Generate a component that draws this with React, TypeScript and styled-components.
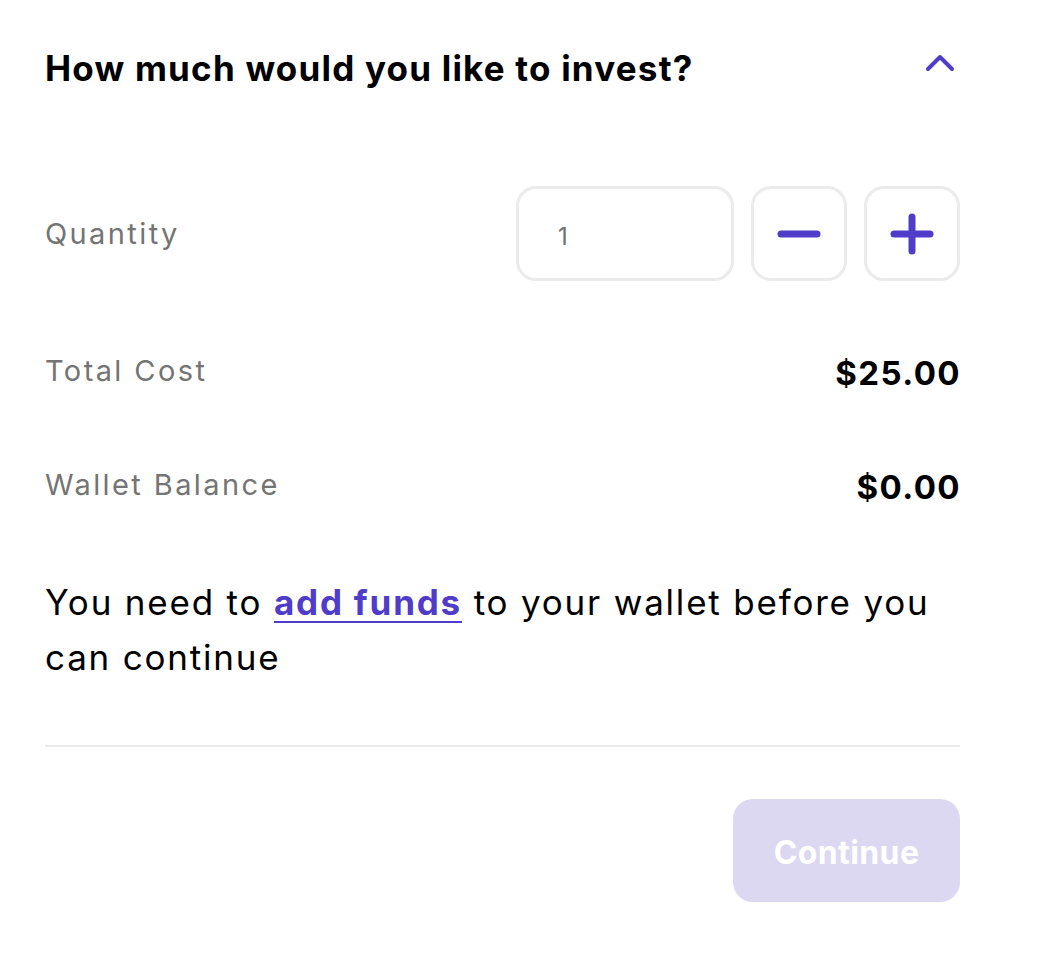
import styled, { createGlobalStyle } from "styled-components";

const GlobalStyle = createGlobalStyle`
  html, body {
    margin: 0;
    padding: 0;
    background: #ffffff;
  }
  body {
    font-family: Inter, "Noto Sans", sans-serif;
    color: #000;
  }
`;

const Panel = styled.div`
  width: 915px;
  padding: 40px 78px 0 45px;
  display: flex;
  flex-direction: column;
`;

const Header = styled.div`
  height: 56px;
  display: flex;
  align-items: center;
  justify-content: space-between;
`;

const Title = styled.h2`
  margin: 0;
  font-size: 35px;
  font-weight: 700;
  letter-spacing: 1.2px;
`;

const Toggle = styled.button`
  border: 0;
  background: none;
  padding: 0;
  margin-right: 3px;
  margin-top: -10px;
  display: flex;
  cursor: pointer;
`;

const Row = styled.div<{ $gap: number; $height: number }>`
  margin-top: ${(p) => p.$gap}px;
  height: ${(p) => p.$height}px;
  display: flex;
  align-items: center;
  justify-content: space-between;
`;

const Label = styled.span`
  font-size: 29px;
  color: #747474;
  letter-spacing: 2.4px;
`;

const Value = styled.span`
  font-size: 33px;
  font-weight: 700;
  letter-spacing: 1.4px;
  margin-top: 6px;
  margin-right: -1px;
`;

const Stepper = styled.div`
  display: flex;
  gap: 17px;
  height: 100%;
`;

const QtyInput = styled.input`
  box-sizing: border-box;
  width: 218px;
  height: 100%;
  border: 3px solid #ebebeb;
  border-radius: 20px;
  padding: 6px 0 0 39px;
  font-family: inherit;
  font-size: 24px;
  color: #6f6f6f;
  outline: none;
`;

const StepButton = styled.button`
  box-sizing: border-box;
  width: 96px;
  height: 100%;
  border: 3px solid #ebebeb;
  border-radius: 20px;
  background: #fff;
  display: flex;
  align-items: center;
  justify-content: center;
  cursor: pointer;
`;

const Note = styled.p`
  margin: 71px 0 0;
  font-size: 35px;
  line-height: 55px;
  letter-spacing: 1.8px;
`;

const Link = styled.a`
  color: #4f3cc9;
  font-weight: 700;
  text-decoration: underline;
  text-decoration-thickness: 2px;
  text-underline-offset: 6px;
`;

const Divider = styled.hr`
  margin: 60px 0 0;
  border: 0;
  height: 2px;
  background: #ebebeb;
`;

const Footer = styled.div`
  margin-top: 52px;
  display: flex;
  justify-content: flex-end;
`;

const Continue = styled.button`
  width: 227px;
  height: 103px;
  border: 0;
  border-radius: 20px;
  background: #dcd8f2;
  color: #fff;
  font-family: inherit;
  font-size: 32px;
  font-weight: 700;
  letter-spacing: 0.4px;
  padding-top: 4px;
`;

const purple = "#4f3cc9";

export default function App() {
  return (
    <>
      <GlobalStyle />
      <Panel>
        <Header>
          <Title>How much would you like to invest?</Title>
          <Toggle aria-label="collapse">
            <svg width="34" height="20" viewBox="0 0 34 20">
              <polyline
                points="5,16 17,4 29,16"
                fill="none"
                stroke={purple}
                strokeWidth="4"
                strokeLinecap="round"
                strokeLinejoin="round"
              />
            </svg>
          </Toggle>
        </Header>

        <Row $gap={90} $height={95}>
          <Label>Quantity</Label>
          <Stepper>
            <QtyInput defaultValue="1" />
            <StepButton aria-label="decrease">
              <svg width="44" height="10" viewBox="0 0 44 10">
                <line x1="4" y1="5" x2="40" y2="5" stroke={purple} strokeWidth="7" strokeLinecap="round" />
              </svg>
            </StepButton>
            <StepButton aria-label="increase">
              <svg width="44" height="42" viewBox="0 0 44 42">
                <line x1="4" y1="21" x2="40" y2="21" stroke={purple} strokeWidth="7" strokeLinecap="round" />
                <line x1="22" y1="4" x2="22" y2="38" stroke={purple} strokeWidth="7" strokeLinecap="round" />
              </svg>
            </StepButton>
          </Stepper>
        </Row>

        <Row $gap={69} $height={40}>
          <Label>Total Cost</Label>
          <Value>$25.00</Value>
        </Row>

        <Row $gap={74} $height={40}>
          <Label>Wallet Balance</Label>
          <Value>$0.00</Value>
        </Row>

        <Note>
          You need to <Link href="#">add funds</Link> to your wallet before you
          can continue
        </Note>

        <Divider />

        <Footer>
          <Continue disabled>Continue</Continue>
        </Footer>
      </Panel>
    </>
  );
}
